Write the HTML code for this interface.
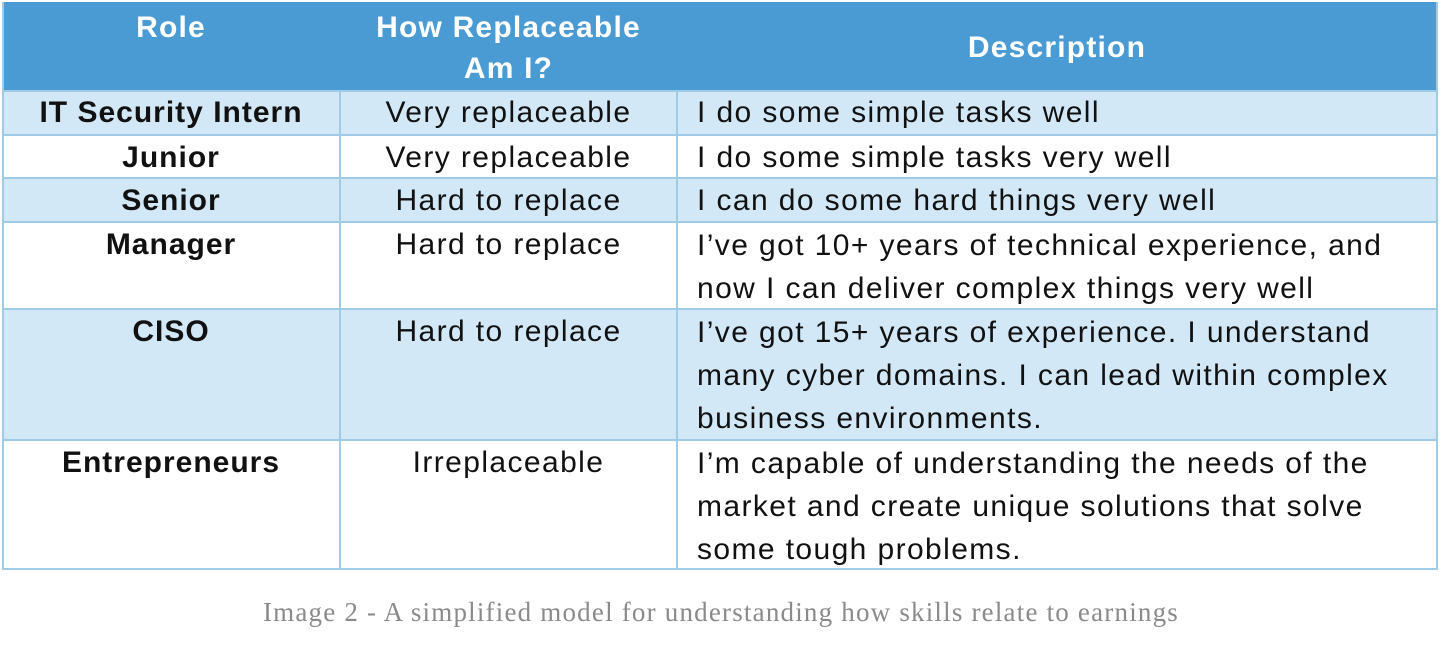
<!DOCTYPE html>
<html><head><style>
body{margin:0;width:1442px;height:646px;background:#fff;position:relative;overflow:hidden;font-family:"Liberation Sans","DejaVu Sans",sans-serif;}
.c{position:absolute;box-sizing:border-box;font-size:30px;letter-spacing:1.4px;color:#111;white-space:nowrap;}
.h{background:#4a9bd3;color:#fff;font-weight:bold;text-align:center;font-size:30px;letter-spacing:1.2px;line-height:41px;}
.b{background:#d2e8f7;}
.w{background:#fff;}
.r{font-weight:bold;text-align:center;letter-spacing:1px;}
.m{text-align:center;}
.d{padding-left:20px;line-height:43px;}
.line{position:absolute;background:#9fcbe6;}
.cap{position:absolute;left:0;width:1442px;top:597px;text-align:center;font-family:"Liberation Serif",serif;font-size:27px;letter-spacing:1.2px;color:#8a8a8a;}
</style></head><body>
<div class="c h" style="left:2px;top:2px;width:338px;height:88px;padding-top:5px">Role</div>
<div class="c h" style="left:340px;top:2px;width:337px;height:88px;padding-top:5px">How Replaceable<br>Am I?</div>
<div class="c h" style="left:677px;top:2px;width:760px;height:88px;padding-top:25px">Description</div>

<div class="c b r" style="left:2px;top:90px;width:338px;height:45px;line-height:46px">IT Security Intern</div>
<div class="c b m" style="left:340px;top:90px;width:337px;height:45px;line-height:46px">Very replaceable</div>
<div class="c b d" style="left:677px;top:90px;width:760px;height:45px;line-height:46px">I do some simple tasks well</div>

<div class="c w r" style="left:2px;top:135px;width:338px;height:43px;line-height:46px">Junior</div>
<div class="c w m" style="left:340px;top:135px;width:337px;height:43px;line-height:46px">Very replaceable</div>
<div class="c w d" style="left:677px;top:135px;width:760px;height:43px;line-height:46px">I do some simple tasks very well</div>

<div class="c b r" style="left:2px;top:178px;width:338px;height:44px;line-height:46px">Senior</div>
<div class="c b m" style="left:340px;top:178px;width:337px;height:44px;line-height:46px">Hard to replace</div>
<div class="c b d" style="left:677px;top:178px;width:760px;height:44px;line-height:46px">I can do some hard things very well</div>

<div class="c w r" style="left:2px;top:222px;width:338px;height:87px;line-height:46px">Manager</div>
<div class="c w m" style="left:340px;top:222px;width:337px;height:87px;line-height:46px">Hard to replace</div>
<div class="c w d" style="left:677px;top:222px;width:760px;height:87px;padding-top:2px">I’ve got 10+ years of technical experience, and<br>now I can deliver complex things very well</div>

<div class="c b r" style="left:2px;top:309px;width:338px;height:131px;line-height:46px">CISO</div>
<div class="c b m" style="left:340px;top:309px;width:337px;height:131px;line-height:46px">Hard to replace</div>
<div class="c b d" style="left:677px;top:309px;width:760px;height:131px;padding-top:2px">I’ve got 15+ years of experience. I understand<br>many cyber domains. I can lead within complex<br>business environments.</div>

<div class="c w r" style="left:2px;top:440px;width:338px;height:129px;line-height:46px">Entrepreneurs</div>
<div class="c w m" style="left:340px;top:440px;width:337px;height:129px;line-height:46px">Irreplaceable</div>
<div class="c w d" style="left:677px;top:440px;width:760px;height:129px;padding-top:2px">I’m capable of understanding the needs of the<br>market and create unique solutions that solve<br>some tough problems.</div>

<div class="line" style="left:2px;top:90px;width:1435px;height:2px"></div>
<div class="line" style="left:2px;top:134px;width:1435px;height:2px"></div>
<div class="line" style="left:2px;top:177px;width:1435px;height:2px"></div>
<div class="line" style="left:2px;top:221px;width:1435px;height:2px"></div>
<div class="line" style="left:2px;top:308px;width:1435px;height:2px"></div>
<div class="line" style="left:2px;top:439px;width:1435px;height:2px"></div>
<div class="line" style="left:2px;top:568px;width:1436px;height:2px"></div>
<div class="line" style="left:339px;top:90px;width:2px;height:479px"></div>
<div class="line" style="left:676px;top:90px;width:2px;height:479px"></div>
<div class="line" style="left:2px;top:2px;width:2px;height:567px"></div>
<div class="line" style="left:1436px;top:2px;width:2px;height:567px"></div>

<div class="cap">Image 2 - A simplified model for understanding how skills relate to earnings</div>
</body></html>
